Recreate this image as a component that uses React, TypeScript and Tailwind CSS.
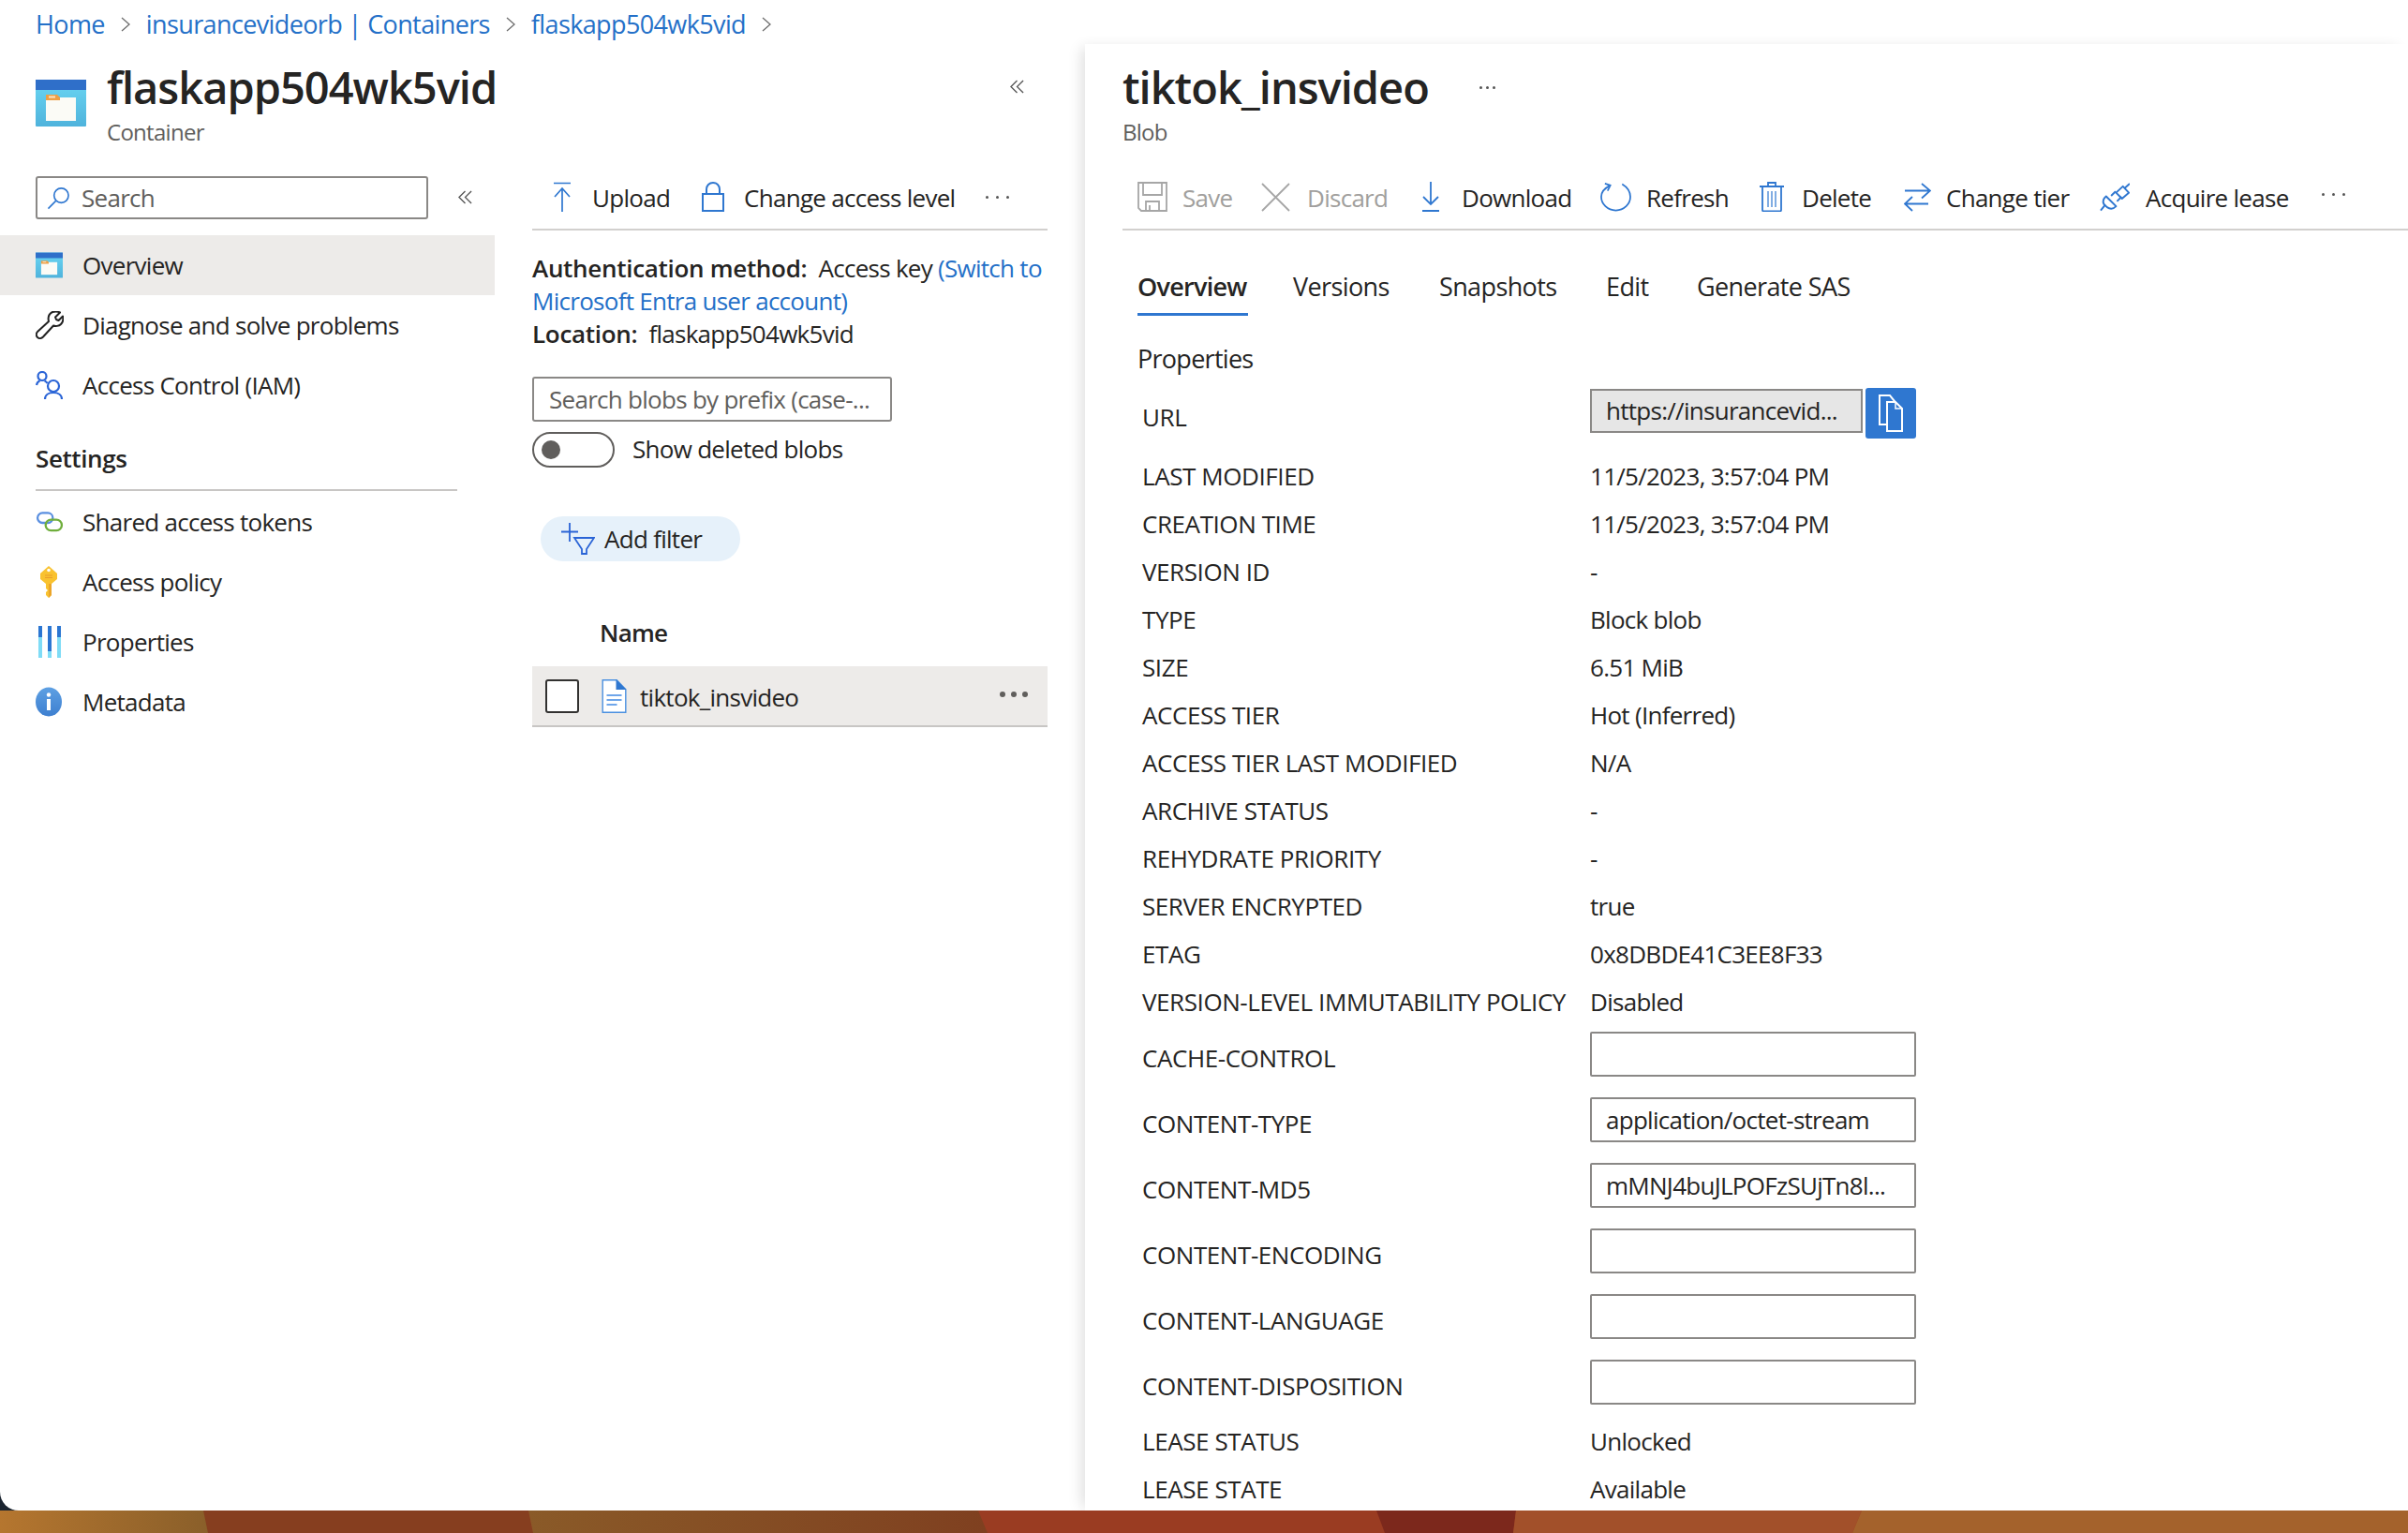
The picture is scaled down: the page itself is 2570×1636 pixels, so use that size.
import React from "react";

const B = "#2f77d0";

function ContainerIcon({ className }: { className: string }) {
  return (
    <svg viewBox="0 0 54 50" className={className}>
      <defs>
        <linearGradient id="cg" x1="0" y1="0" x2="0" y2="1">
          <stop offset="0" stopColor="#6ad6f3" />
          <stop offset="1" stopColor="#4fb3dc" />
        </linearGradient>
      </defs>
      <rect x="0" y="0" width="54" height="50" rx="1" fill="url(#cg)" />
      <rect x="0" y="0" width="54" height="11" fill="#2f6fc9" />
      <rect x="11" y="19" width="32" height="25" fill="#fbfbf6" />
      <path d="M11 16h12l3 3v3H11z" fill="#ee9f45" />
      <rect x="14" y="17.5" width="7" height="2" fill="#fbe3bf" />
    </svg>
  );
}

const Ic = {
  chevron: () => (
    <svg viewBox="0 0 12 18" className="w-[12px] h-[18px]" fill="none" stroke="#6d6d6d" strokeWidth="1.3">
      <path d="M2 2l8 7-8 7" />
    </svg>
  ),
  dbl: () => (
    <svg viewBox="0 0 18 16" className="w-[17px] h-[15px]" fill="none" stroke="#555" strokeWidth="1.4">
      <path d="M9 1L2 8l7 7M16 1L9 8l7 7" />
    </svg>
  ),
  search: () => (
    <svg viewBox="0 0 26 26" className="w-[25px] h-[25px]" fill="none" stroke={B} strokeWidth="1.7">
      <circle cx="16" cy="10" r="8" />
      <path d="M10 16L1.5 24.5" />
    </svg>
  ),
  wrench: () => (
    <svg viewBox="0 0 30 30" className="w-[30px] h-[30px]" fill="none" stroke="#222" strokeWidth="2" strokeLinejoin="round">
      <path d="M18 1C22 0 25 1 26 1.500L21 6.500L22 9L24.500 10L29 5.500C30 9 29 12 27 14C25 16 21 16.500 19 15.500L8 27.500C6 29.500 3.500 29.500 2 28C.5 26.500 .5 24 2 22L14 11C13 7 14 3 18 1Z" />
    </svg>
  ),
  iam: () => (
    <svg viewBox="0 0 30 30" className="w-[30px] h-[30px]" fill="none" stroke="#2a64d6" strokeWidth="2.200">
      <circle cx="7" cy="5.500" r="4.500" />
      <circle cx="19" cy="16" r="6" />
      <path d="M1 15C1.500 12 3 11 4.500 10.500M9.500 10.500C11 11 12 12 12.500 13M10 30C10 25.500 14 23 19 23S28 25.500 28 30" />
    </svg>
  ),
  link: () => (
    <svg viewBox="0 0 30 24" className="w-[30px] h-[23px]" fill="none" strokeWidth="2.4">
      <rect x="1.500" y="1.500" width="17" height="11" rx="5.500" stroke="#5a8fe0" />
      <rect x="10.500" y="9" width="18" height="12" rx="6" stroke="#6fae3c" />
    </svg>
  ),
  key: () => (
    <svg viewBox="0 0 20 34" className="w-[20px] h-[34px] ml-[4px]">
      <path d="M10 0l9 8v6l-6 5v12l-3 3-3-3v-3l2-2-2-2v-5L1 14V8z" fill="#f9c22f" />
      <path d="M10 19h3v12l-3 3z" fill="#eba52a" />
      <circle cx="10" cy="4.500" r="1.800" fill="#fff" />
      <path d="M6 10h8M6 12.500h8" stroke="#ea9c2a" strokeWidth="1" />
    </svg>
  ),
  props: () => (
    <svg viewBox="0 0 24 34" className="w-[24px] h-[34px] ml-[3px]">
      <rect x="0" y="0" width="4" height="34" fill="#7fdcf6" />
      <rect x="0" y="0" width="4" height="12" fill="#2b76d2" />
      <rect x="10" y="0" width="4" height="34" fill="#7fdcf6" />
      <rect x="10" y="0" width="4" height="27" fill="#2b76d2" />
      <rect x="20" y="0" width="4" height="34" fill="#7fdcf6" />
      <rect x="20" y="0" width="4" height="12" fill="#2b76d2" />
    </svg>
  ),
  info: () => (
    <svg viewBox="0 0 28 32" className="w-[28px] h-[32px]">
      <defs>
        <linearGradient id="ig" x1="0" y1="0" x2="0" y2="1">
          <stop offset="0" stopColor="#5ea0e3" />
          <stop offset="1" stopColor="#3d7fd0" />
        </linearGradient>
      </defs>
      <ellipse cx="14" cy="16" rx="14" ry="15.500" fill="url(#ig)" />
      <circle cx="14" cy="8.500" r="2.200" fill="#fff" />
      <rect x="12" y="13" width="4" height="12" fill="#fff" />
    </svg>
  ),
  upload: () => (
    <svg viewBox="0 0 20 32" className="w-[20px] h-[32px] -mt-[2px]" fill="none" stroke={B} strokeWidth="1.700">
      <path d="M1 1.500h18M10 32V7M2 16l8-9 8 9" />
    </svg>
  ),
  lock: () => (
    <svg viewBox="0 0 24 32" className="w-[24px] h-[32px] -mt-[2px]" fill="none" stroke={B} strokeWidth="2">
      <rect x="1" y="13" width="22" height="18" />
      <path d="M5 13V8c0-4 3-7 7-7s7 3 7 7v5" />
    </svg>
  ),
  filter: () => (
    <svg viewBox="0 0 36 34" className="w-[36px] h-[34px]" fill="none" stroke="#2a64d6" strokeWidth="1.800">
      <path d="M9 0v20M0 9.500h18" />
      <path d="M14 16h21l-8 12v5h-5v-5z" />
    </svg>
  ),
  file: () => (
    <svg viewBox="0 0 26 36" className="w-[27px] h-[36px]">
      <path d="M.7 .7h15l9.600 10v24.600H.7z" fill="#fff" stroke="#4a90e0" strokeWidth="1.400" />
      <path d="M15 0l11 11H15z" fill="#2f77d0" />
      <path d="M5 17h16M5 22h16M5 27h11" stroke="#6fa6ea" strokeWidth="2.200" />
    </svg>
  ),
  save: () => (
    <svg viewBox="0 0 32 32" className="w-[32px] h-[32px] -mt-[2px]" fill="none" stroke="#a6a6a6" strokeWidth="1.800">
      <path d="M1 1h30v30H4l-3-3z" />
      <path d="M6 1v13h20V1M9 31V21h14v10M13 25v6" />
    </svg>
  ),
  x: () => (
    <svg viewBox="0 0 31 31" className="w-[31px] h-[31px] -mt-[2px]" fill="none" stroke="#a6a6a6" strokeWidth="1.800">
      <path d="M1 1l29 29M30 1L1 30" />
    </svg>
  ),
  download: () => (
    <svg viewBox="0 0 22 32" className="w-[22px] h-[32px] -mt-[2px]" fill="none" stroke={B} strokeWidth="1.800">
      <path d="M11 0v24M3 16l8 8 8-8M2 31h18" />
    </svg>
  ),
  refresh: () => (
    <svg viewBox="0 0 34 32" className="w-[33px] h-[32px] -mt-[2px]" fill="none" stroke={B} strokeWidth="1.800">
      <path d="M10 4C4 7 1 11 1 16c0 8 7 15 16 15s16-7 16-15c0-6-4-11-9-14" />
      <path d="M5 1.500l6 2-3 6" />
    </svg>
  ),
  trash: () => (
    <svg viewBox="0 0 26 32" className="w-[26px] h-[32px] -mt-[2px]" fill="none" stroke={B} strokeWidth="1.800">
      <path d="M0 5h26M9 5V1h8v4M3 5v25c0 1 .5 1.500 1.500 1.500h17c1 0 1.500-.5 1.500-1.500V5" />
      <path d="M9 10v17M13 10v17M17 10v17" strokeWidth="1.200" />
    </svg>
  ),
  swap: () => (
    <svg viewBox="0 0 29 31" className="w-[29px] h-[31px] -mt-[2px]" fill="none" stroke={B} strokeWidth="1.800">
      <path d="M1 8.500H28M19 1l9 7.500-9 8" />
      <path d="M26 22.500H1M9 15l-8 7.500 8 7.500" />
    </svg>
  ),
  plug: () => (
    <svg viewBox="0 0 33 32" className="w-[32px] h-[31px] -mt-[2px]" fill="none" stroke={B} strokeWidth="2" strokeLinejoin="round">
      <path d="M33 1l-5.500 5M1 30.500l5-6" />
      <path d="M18 11l7.500-7L32 11l-7.500 6.500z" />
      <path d="M7 15L18 26c-3 3-7 3-10 1L4.500 23.500C3 20.500 4 17.500 7 15z" />
      <path d="M12.500 14.500l5-5M19 20.500l5-5" />
    </svg>
  ),
  copy: () => (
    <svg viewBox="0 0 26 40" className="w-[26px] h-[40px]" fill="none" stroke="#fff" strokeWidth="2">
      <path d="M1 1h11l5 6v25H1z" />
      <path d="M9 8h9l7 7v24H9z" fill={B} />
      <path d="M18 9v6h6" strokeWidth="1.500" />
    </svg>
  ),
};

function Dots({ className }: { className: string }) {
  return (
    <span className={className}>
      <i className="block w-[3px] h-[3px] rounded-full bg-[#555]" />
      <i className="block w-[3px] h-[3px] rounded-full bg-[#555]" />
      <i className="block w-[3px] h-[3px] rounded-full bg-[#555]" />
    </span>
  );
}

const nav = [
  { t: "Overview", i: <ContainerIcon className="w-[29px] h-[28px]" />, a: true },
  { t: "Diagnose and solve problems", i: <Ic.wrench /> },
  { t: "Access Control (IAM)", i: <Ic.iam /> },
];
const nav2 = [
  { t: "Shared access tokens", i: <Ic.link /> },
  { t: "Access policy", i: <Ic.key /> },
  { t: "Properties", i: <Ic.props /> },
  { t: "Metadata", i: <Ic.info /> },
];

const rows1 = [
  ["LAST MODIFIED", "11/5/2023, 3:57:04 PM"],
  ["CREATION TIME", "11/5/2023, 3:57:04 PM"],
  ["VERSION ID", "-"],
  ["TYPE", "Block blob"],
  ["SIZE", "6.51 MiB"],
  ["ACCESS TIER", "Hot (Inferred)"],
  ["ACCESS TIER LAST MODIFIED", "N/A"],
  ["ARCHIVE STATUS", "-"],
  ["REHYDRATE PRIORITY", "-"],
  ["SERVER ENCRYPTED", "true"],
  ["ETAG", "0x8DBDE41C3EE8F33"],
  ["VERSION-LEVEL IMMUTABILITY POLICY", "Disabled"],
];
const rows2 = [
  ["CACHE-CONTROL", ""],
  ["CONTENT-TYPE", "application/octet-stream"],
  ["CONTENT-MD5", "mMNJ4buJLPOFzSUjTn8l..."],
  ["CONTENT-ENCODING", ""],
  ["CONTENT-LANGUAGE", ""],
  ["CONTENT-DISPOSITION", ""],
];

const actions = [
  { t: "Save", i: <Ic.save />, off: true, w: "w-[132px]", g: "gap-[16px]" },
  { t: "Discard", i: <Ic.x />, off: true, w: "w-[170px]", g: "gap-[18px]" },
  { t: "Download", i: <Ic.download />, w: "w-[192px]", g: "gap-[22px]" },
  { t: "Refresh", i: <Ic.refresh />, w: "w-[170px]", g: "gap-[16px]" },
  { t: "Delete", i: <Ic.trash />, w: "w-[151px]", g: "gap-[19px]" },
  { t: "Change tier", i: <Ic.swap />, w: "w-[212px] pl-[3px]", g: "gap-[16px]" },
  { t: "Acquire lease", i: <Ic.plug />, w: "w-[234px]", g: "gap-[17px]" },
];

const label = "w-[478px] shrink-0 tracking-[-0.42px]";

export default function App() {
  return (
    <div className="w-[2570px] h-[1636px] overflow-hidden flex flex-col bg-[#1b2430] font-['Open_Sans',sans-serif] text-[26px] tracking-[-0.72px] text-[#252423]">
      <div className="h-[1612px] bg-white rounded-bl-[20px] flex flex-col overflow-hidden">
        <div className="h-[52px] pl-[38px] flex items-center text-[27px] tracking-[-0.62px] text-[#2470c8]">
          <span>Home</span>
          <span className="mx-[16px] flex"><Ic.chevron /></span>
          <span>insurancevideorb | Containers</span>
          <span className="mx-[16px] flex"><Ic.chevron /></span>
          <span>flaskapp504wk5vid</span>
          <span className="mx-[16px] flex"><Ic.chevron /></span>
        </div>

        <div className="flex-1 flex min-h-0">
          <section className="w-[1158px] flex flex-col">
            <header className="h-[136px] pl-[38px] flex items-start">
              <ContainerIcon className="w-[54px] h-[50px] mt-[33px]" />
              <div className="ml-[23px] flex-1">
                <div className="h-[68px] pt-[13px] flex items-center justify-between pr-[64px]">
                  <h1 className="text-[47px] leading-[60px] font-semibold tracking-[-1px] -ml-[1px]">flaskapp504wk5vid</h1>
                  <Ic.dbl />
                </div>
                <div className="text-[24px] leading-[32px] text-[#605e5c] mt-[5px] -ml-[1px]">Container</div>
              </div>
            </header>
            <div className="flex-1 flex">
              <aside className="w-[528px] shrink-0">
                <div className="h-[63px] flex items-start">
                  <div className="ml-[38px] w-[419px] h-[46px] border-2 border-[#8a8886] rounded-[3px] flex items-center pl-[10px] gap-[12px] text-[#605e5c]">
                    <Ic.search />
                    <span>Search</span>
                  </div>
                  <span className="ml-[31px] mt-[15px] flex"><Ic.dbl /></span>
                </div>
                {nav.map((n) => (
                  <div key={n.t} className={n.a ? "h-[64px] bg-[#edebe9] flex items-center" : "h-[64px] flex items-center"}>
                    <span className="w-[50px] ml-[38px] flex items-center">{n.i}</span>
                    <span>{n.t}</span>
                  </div>
                ))}
                <div className="mx-[38px] w-[450px] mt-[27px] h-[54px] border-b-2 border-[#c8c6c4] font-semibold tracking-[-0.4px]">Settings</div>
                <div className="h-[1px]" />
                {nav2.map((n) => (
                  <div key={n.t} className="h-[64px] flex items-center">
                    <span className="w-[50px] ml-[38px] flex items-center">{n.i}</span>
                    <span>{n.t}</span>
                  </div>
                ))}
              </aside>
              <div className="w-[550px] ml-[40px] shrink-0">
                <div className="h-[58px] border-b-2 border-[#d2d0ce] flex items-start">
                  <div className="flex items-center h-[46px] pl-[22px]">
                    <Ic.upload />
                    <span className="ml-[22px]">Upload</span>
                    <span className="ml-[34px] flex"><Ic.lock /></span>
                    <span className="ml-[21px]">Change access level</span>
                    <Dots className="ml-[33px] -mt-[2px] flex gap-[8px]" />
                  </div>
                </div>
                <div className="mt-[23px] leading-[35px]">
                  <div><b className="font-semibold tracking-[-0.3px]">Authentication method:</b>&nbsp; Access key <span className="text-[#2470c8]">(Switch to</span></div>
                  <div className="text-[#2470c8]">Microsoft Entra user account)</div>
                  <div><b className="font-semibold tracking-[-0.3px]">Location:</b>&nbsp; flaskapp504wk5vid</div>
                </div>
                <div className="mt-[28px] w-[384px] h-[48px] border-2 border-[#8a8886] rounded-[3px] flex items-center pl-[16px] text-[#605e5c]">
                  Search blobs by prefix (case-...
                </div>
                <div className="mt-[11px] flex items-center">
                  <span className="w-[88px] h-[38px] rounded-full border-2 border-[#605e5c] flex items-center pl-[8px]">
                    <i className="block w-[20px] h-[20px] rounded-full bg-[#605e5c]" />
                  </span>
                  <span className="ml-[19px] -mt-[2px]">Show deleted blobs</span>
                </div>
                <div className="mt-[52px] ml-[9px] w-[213px] h-[48px] rounded-full bg-[#e6f1fa] flex items-center pl-[22px]">
                  <Ic.filter />
                  <span className="ml-[10px]">Add filter</span>
                </div>
                <div className="mt-[56px] ml-[72px] h-[40px] leading-[40px] font-semibold">Name</div>
                <div className="mt-[16px] h-[65px] bg-[#edebe9] border-b-2 border-[#c8c6c4] flex items-center pl-[14px] pr-[18px]">
                  <span className="w-[36px] h-[36px] bg-white border-2 border-[#323130] rounded-[3px]" />
                  <span className="ml-[24px] flex"><Ic.file /></span>
                  <span className="ml-[14px] pt-[3px]">tiktok_insvideo</span>
                  <span className="ml-auto flex gap-[6px] -mt-[4px] mr-[3px]">
                    <i className="block w-[6px] h-[6px] rounded-full bg-[#605e5c]" />
                    <i className="block w-[6px] h-[6px] rounded-full bg-[#605e5c]" />
                    <i className="block w-[6px] h-[6px] rounded-full bg-[#605e5c]" />
                  </span>
                </div>
              </div>
            </div>
          </section>

          <section className="flex-1 -mt-[5px] pl-[40px] shadow-[-8px_0_14px_-4px_rgba(0,0,0,0.12)] overflow-hidden">
            <div className="h-[141px] pt-[13px]">
              <div className="flex items-center h-[66px]">
                <h2 className="text-[47px] leading-[60px] font-semibold tracking-[-1px]">tiktok_insvideo</h2>
                <Dots className="ml-[54px] flex gap-[4px]" />
              </div>
              <div className="text-[24px] leading-[32px] text-[#605e5c] -mt-[1px]">Blob</div>
            </div>
            <div className="h-[58px] border-b-2 border-[#d2d0ce] flex items-start pl-[16px]">
              {actions.map((a) => (
                <div key={a.t} className={`${a.w} ${a.g} h-[46px] flex items-center shrink-0 ${a.off ? "text-[#a19f9d]" : ""}`}>
                  {a.i}
                  <span>{a.t}</span>
                </div>
              ))}
              <Dots className="mt-[18px] ml-[3px] flex gap-[8px]" />
            </div>
            <div className="h-[90px] pl-[16px] flex items-start text-[27px] tracking-[-0.62px]">
              <div className="h-[90px] pt-[43px] relative font-semibold leading-[34px] w-[118px] tracking-[-0.72px]">
                Overview
                <span className="absolute left-0 right-0 top-[88px] h-[3px] bg-[#2f77d0]" />
              </div>
              <div className="pt-[43px] leading-[34px] ml-[48px] w-[105px]">Versions</div>
              <div className="pt-[43px] leading-[34px] ml-[51px] w-[128px]">Snapshots</div>
              <div className="pt-[43px] leading-[34px] ml-[50px] w-[47px]">Edit</div>
              <div className="pt-[43px] leading-[34px] ml-[50px]">Generate SAS</div>
            </div>
            <div className="pl-[16px] h-[34px] leading-[34px] mt-[30px] text-[27px]">Properties</div>
            <div className="pl-[21px] mt-[14px]">
              <div className="h-[69px] flex">
                <span className={`${label} pt-[16px] leading-[30px]`}>URL</span>
                <div className="w-[291px] h-[47px] mt-[1px] bg-[#e6e6e6] border-2 border-[#8a8886] flex items-center pl-[15px]">https://insurancevid...</div>
                <div className="w-[54px] h-[54px] ml-[3px] bg-[#2f77d0] rounded-[3px] flex items-center justify-center"><Ic.copy /></div>
              </div>
              {rows1.map(([k, v]) => (
                <div key={k} className="h-[51px] flex items-center">
                  <span className={label}>{k}</span>
                  <span>{v}</span>
                </div>
              ))}
              <div className="pt-[6px] pb-[14px] flex flex-col gap-[22px]">
                {rows2.map(([k, v]) => (
                  <div key={k} className="h-[48px] flex items-center">
                    <span className={`${label} pt-[8px]`}>{k}</span>
                    <div className="w-[348px] h-[48px] border-2 border-[#8a8886] rounded-[2px] flex items-center pl-[15px]">{v}</div>
                  </div>
                ))}
              </div>
              <div className="h-[51px] flex items-center"><span className={label}>LEASE STATUS</span><span>Unlocked</span></div>
              <div className="h-[51px] flex items-center"><span className={label}>LEASE STATE</span><span>Available</span></div>
            </div>
          </section>
        </div>
      </div>
      <svg viewBox="0 0 2570 24" className="w-[2570px] h-[24px] block shrink-0">
        <defs>
          <linearGradient id="w1" x1="0" y1="0" x2="1" y2="0">
            <stop offset="0" stopColor="#b5762f" />
            <stop offset="1" stopColor="#8a5f2a" />
          </linearGradient>
          <linearGradient id="w2" x1="0" y1="0" x2="1" y2="0">
            <stop offset="0" stopColor="#8a5a28" />
            <stop offset="1" stopColor="#7f4020" />
          </linearGradient>
        </defs>
        <rect width="2570" height="24" fill="#9a3c22" />
        <rect width="222" height="24" fill="url(#w1)" />
        <path d="M217 0h347l5 24H222z" fill="#863e1f" />
        <path d="M564 0h480l10 24H569z" fill="url(#w2)" />
        <path d="M1469 0h149l-3 24h-137z" fill="#7c281c" />
        <path d="M1618 0h369l-10 24H1615z" fill="#a2502a" />
        <path d="M1987 0h583v24H1977z" fill="#a4622c" />
      </svg>
    </div>
  );
}
